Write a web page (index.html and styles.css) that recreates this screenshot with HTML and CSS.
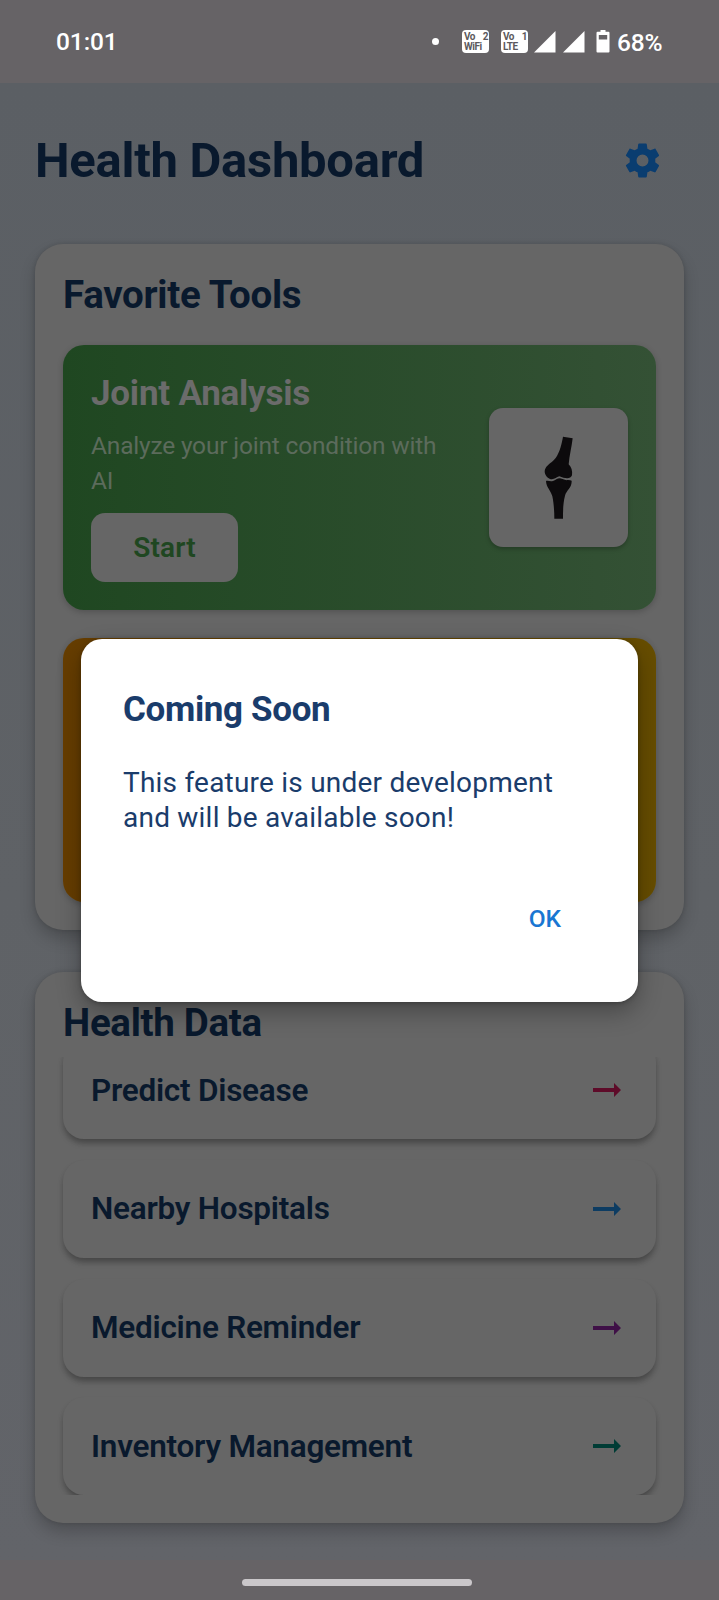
FILE: index.html
```html
<!DOCTYPE html>
<html lang="en">
<head>
<meta charset="utf-8">
<title>Health Dashboard</title>
<link rel="stylesheet" href="styles.css">
</head>
<body>
<div class="screen">
  <div class="status">
    <span class="time">01:01</span>
    <span class="dot"></span>
    <span class="badge wifi"><span class="pair"><span>Vo</span><span>2</span></span><span>WiFi</span></span>
    <span class="badge lte"><span class="pair"><span>Vo</span><span>1</span></span><span>LTE</span></span>
    <svg class="signal" viewBox="0 0 22 22"><path d="M21.5 0V21.5H0Z"/></svg>
    <svg class="signal second" viewBox="0 0 22 22"><path d="M21.5 0V21.5H0Z"/></svg>
    <svg class="battery" viewBox="0 0 14 23"><path fill-rule="evenodd" d="M4.500 0H9.500V1.800H12.500Q13.500 1.800 13.500 3V21.500Q13.500 22.500 12.500 22.500H1.500Q.5 22.500 .5 21.500V3Q.5 1.800 1.500 1.800H4.500ZM2.800 5V9.500H11.200V5Z"/></svg>
    <span class="percent">68%</span>
  </div>

  <main class="app">
    <header class="header">
      <h1>Health Dashboard</h1>
      <svg class="gear" viewBox="0 0 24 24"><path d="M12 15.5A3.500 3.500 0 0 1 8.500 12 3.500 3.500 0 0 1 12 8.500a3.500 3.500 0 0 1 3.500 3.500 3.500 3.500 0 0 1-3.500 3.500m7.430-2.530c.04-.32.07-.64.07-.97s-.03-.66-.07-1l2.110-1.630c.19-.15.24-.42.12-.64l-2-3.460c-.12-.22-.39-.31-.61-.22l-2.490 1c-.52-.39-1.060-.73-1.690-.98l-.37-2.650A.506.506 0 0 0 14 2h-4c-.25 0-.46.18-.5.42l-.37 2.650c-.63.25-1.170.59-1.690.98l-2.490-1c-.22-.09-.49 0-.61.22l-2 3.460c-.13.22-.07.49.12.64L4.570 11c-.04.34-.07.67-.07 1s.03.65.07.97l-2.110 1.660c-.19.15-.25.42-.12.64l2 3.460c.12.22.39.3.61.22l2.490-1.010c.52.4 1.060.74 1.690.99l.37 2.650c.04.24.25.42.5.42h4c.25 0 .46-.18.5-.42l.37-2.650c.63-.26 1.170-.59 1.690-.99l2.490 1.010c.22.08.49 0 .61-.22l2-3.460c.12-.22.07-.49-.12-.64z"/></svg>
    </header>

    <section class="card">
      <h2>Favorite Tools</h2>
      <div class="tool green">
        <div class="tool-text">
          <h3>Joint Analysis</h3>
          <p>Analyze your joint condition with AI</p>
          <button class="start">Start</button>
        </div>
        <div class="picture">
          <svg viewBox="387 534 417 417"><path d="M609 620L638 625C635 652 628 676 626 703C634 711 638 722 636 736C632 748 616 747 598 739C588 742 583 750 570 747C556 741 550 725 557 714C562 704 577 697 587 684C600 665 605 642 609 620Z"/><path d="M558 753C566 751 570 756 579 753C587 751 591 745 600 745C609 747 614 752 624 750Q632 750 635 752C636 774 619 781 615 797C609 820 609 843 609 866H583C583 841 581 817 577 799C571 779 559 772 558 753Z"/></svg>
        </div>
      </div>
      <div class="tool amber"></div>
    </section>

    <section class="card data">
      <h2>Health Data</h2>
      <div class="list">
        <div class="row"><span>Predict Disease</span><svg class="arrow red" viewBox="0 0 28 14"><path d="M0 5H21V0L28 7L21 14V9H0Z"/></svg></div>
        <div class="row"><span>Nearby Hospitals</span><svg class="arrow blue" viewBox="0 0 28 14"><path d="M0 5H21V0L28 7L21 14V9H0Z"/></svg></div>
        <div class="row"><span>Medicine Reminder</span><svg class="arrow purple" viewBox="0 0 28 14"><path d="M0 5H21V0L28 7L21 14V9H0Z"/></svg></div>
        <div class="row"><span>Inventory Management</span><svg class="arrow teal" viewBox="0 0 28 14"><path d="M0 5H21V0L28 7L21 14V9H0Z"/></svg></div>
      </div>
    </section>
  </main>

  <div class="nav"><span class="handle"></span></div>

  <div class="dialog" role="dialog">
    <h2>Coming Soon</h2>
    <p>This feature is under development and will be available soon!</p>
    <button class="ok">OK</button>
  </div>
</div>
</body>
</html>
```
FILE: styles.css
```css
* { box-sizing: border-box; }

body {
  margin: 0;
  font-family: Roboto, "Liberation Sans", sans-serif;
}

h1, h2, h3, p { margin: 0; }

svg { display: block; flex: none; }

button {
  border: 0;
  padding: 0;
  background: none;
  font-family: inherit;
}

.screen {
  position: relative;
  width: 719px;
  height: 1600px;
  overflow: hidden;
  display: flex;
  flex-direction: column;
  background: #666366;
}

/* System status bar */
.status {
  height: 83px;
  flex: none;
  display: flex;
  align-items: center;
  padding: 0 55px 0 56px;
  color: #fff;
  fill: #fff;
  font-size: 24.5px;
  font-weight: 500;
}

.time { width: 376px; letter-spacing: -0.1px; }

.dot {
  width: 7px;
  height: 7px;
  border-radius: 50%;
  background: #fff;
}

.badge {
  width: 27px;
  height: 23px;
  display: flex;
  flex-direction: column;
  justify-content: center;
  padding: 0 1px 0 2px;
  border-radius: 4px;
  background: #fff;
  color: #5c595c;
  font-size: 10px;
  font-weight: 700;
  line-height: 10px;
  letter-spacing: -0.5px;
}

.wifi { margin-left: 23px; }
.lte { margin-left: 12px; margin-right: 6px; }

.pair { display: flex; justify-content: space-between; }

.signal { width: 22px; height: 22px; }
.second { margin-left: 7px; }
.battery { width: 14px; height: 23px; margin: 0 7px 0 11px; }
.percent { margin-top: 2px; letter-spacing: -0.2px; }

.app {
  height: 1477px;
  flex: none;
  padding: 0 35px;
  background: linear-gradient(#5b5f64, #5f6266 55%, #626469);
}

.header {
  height: 155px;
  margin-bottom: 6px;
  display: flex;
  align-items: center;
  justify-content: space-between;
  padding-right: 21px;
}

h1 {
  color: #09192d;
  font-size: 49px;
  line-height: 58px;
  font-weight: 700;
  letter-spacing: -0.28px;
}

.gear { width: 41px; height: 41px; fill: #0a3d70; }

/* Cards */
.card {
  height: 685.5px;
  padding: 28px;
  border-radius: 28px;
  background: #666;
  box-shadow: 0 9px 16px rgba(0, 0, 0, 0.2), 0 0 4px rgba(0, 0, 0, 0.14);
}

.card h2 {
  color: #09192d;
  font-size: 38.500px;
  line-height: 45px;
  font-weight: 700;
  letter-spacing: -0.3px;
}

.tool {
  height: 264.5px;
  margin-top: 28px;
  display: flex;
  align-items: center;
  justify-content: space-between;
  padding: 0 28px;
  border-radius: 21px;
  box-shadow: 0 2px 6px rgba(0, 0, 0, 0.2);
}

.green { background: linear-gradient(90deg, #1f4721, #345135); }
.amber { margin-top: 28px; background: linear-gradient(90deg, #663d00, #664d00); }

.tool-text { width: 370px; }

.tool h3 {
  color: #6b6b6b;
  font-size: 35px;
  line-height: 41px;
  font-weight: 700;
  letter-spacing: -0.22px;
}

.tool p {
  margin: 14px 0 15px;
  color: #5c6b5c;
  font-size: 24.500px;
  line-height: 35px;
  letter-spacing: -0.19px;
}

.start {
  display: block;
  width: 147px;
  height: 69px;
  border-radius: 14px;
  background: #666;
  color: #1f4721;
  font-size: 28px;
  font-weight: 600;
  letter-spacing: 0.2px;
}

.picture {
  width: 139px;
  height: 139px;
  border-radius: 14px;
  background: #666;
  fill: #0c0a0c;
  box-shadow: 0 2px 4px rgba(0, 0, 0, 0.25);
}

.data { height: 551px; margin-top: 42.5px; }

/* Scrolled list: rows are cut at its top and bottom edges only */
.list {
  height: 440px;
  margin-top: 10px;
  display: flex;
  flex-direction: column;
  gap: 20.8px;
  clip-path: inset(2px -12px 0);
}

.row {
  height: 98px;
  flex: none;
  display: flex;
  align-items: center;
  justify-content: space-between;
  padding: 0 35px 0 28px;
  border-radius: 21px;
  background: #666;
  color: #09192d;
  font-size: 31.500px;
  font-weight: 600;
  letter-spacing: -0.25px;
  box-shadow: 0 5px 6px -1px rgba(0, 0, 0, 0.25), 0 4px 5px rgba(0, 0, 0, 0.08);
}

.row:first-child { margin-top: -14px; }

.arrow { width: 28px; height: 14px; }
.red { fill: #5e0b29; }
.blue { fill: #0d3c62; }
.purple { fill: #3f1047; }
.teal { fill: #003c35; }

/* Gesture bar */
.nav {
  height: 40px;
  display: flex;
  justify-content: center;
  padding: 19px 5px 0 0;
}

.handle {
  width: 230px;
  height: 7px;
  border-radius: 4px;
  background: #cac7ca;
}

/* Modal above the page */
.dialog {
  position: absolute;
  left: 81px;
  top: 639px;
  width: 557px;
  height: 363px;
  display: flex;
  flex-direction: column;
  padding: 50px 42px;
  border-radius: 21px;
  background: #fff;
  box-shadow: 0 10px 24px rgba(0, 0, 0, 0.3), 0 1px 4px rgba(0, 0, 0, 0.25);
}

.dialog h2 {
  color: #1a3c6b;
  font-size: 35px;
  line-height: 42px;
  font-weight: 700;
  letter-spacing: -0.35px;
}

.dialog p {
  margin-top: 34px;
  color: #1a3c6b;
  font-size: 28px;
  line-height: 35px;
  letter-spacing: 0.22px;
}

.ok {
  align-self: flex-end;
  margin: 69px 35px 0 0;
  color: #1976d2;
  font-size: 24.500px;
  line-height: 29px;
  font-weight: 500;
}
```
